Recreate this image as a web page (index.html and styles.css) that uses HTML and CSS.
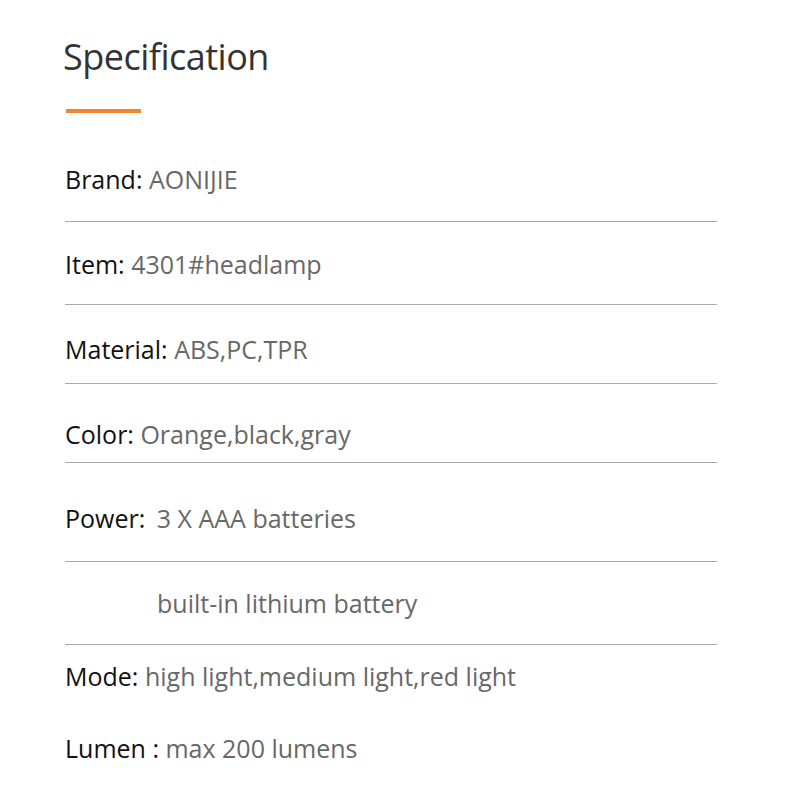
FILE: index.html
```html
<!DOCTYPE html>
<html>
<head>
<meta charset="utf-8">
<link rel="stylesheet" href="styles.css">
</head>
<body>
<div class="spec">
  <h1 class="title">Specification</h1>
  <div class="accent"></div>
  <div class="row r1 sep"><span class="label">Brand: </span><span class="value">AONIJIE</span></div>
  <div class="row r2 sep"><span class="label">Item: </span><span class="value">4301#headlamp</span></div>
  <div class="row r3 sep"><span class="label">Material: </span><span class="value">ABS,PC,TPR</span></div>
  <div class="row r4 sep"><span class="label">Color: </span><span class="value">Orange,black,gray</span></div>
  <div class="row r5 sep"><span class="label">Power: </span><span class="value gap">3 X AAA batteries</span></div>
  <div class="row r6 sep indent"><span class="value">built-in lithium battery</span></div>
  <div class="row r7"><span class="label">Mode: </span><span class="value">high light,medium light,red light</span></div>
  <div class="row r8"><span class="label">Lumen : </span><span class="value">max 200 lumens</span></div>
</div>
</body>
</html>
```

FILE: styles.css
```css
html, body {
  margin: 0;
  padding: 0;
  background: #fff;
}
body {
  font-family: "Open Sans", "Noto Sans", sans-serif;
}
.spec {
  width: 652px;
  padding: 0 0 0 65px;
  display: flex;
  flex-direction: column;
}
.title {
  margin: 35px 0 0 -2px;
  font-size: 36px;
  line-height: 44px;
  font-weight: 400;
  color: #333;
  letter-spacing: -0.5px;
}
.accent {
  margin-top: 30px;
  margin-left: 1px;
  width: 75px;
  height: 4px;
  background: #f5842c;
}
.row {
  font-size: 25px;
  line-height: 30px;
  white-space: pre;
}
.sep {
  border-bottom: 1px solid #ababab;
}
.label { color: #111; }
.value { color: #686868; }
.gap { margin-left: 5px; }
.indent { padding-left: 92px; }
.r1 { padding-top: 51px; padding-bottom: 27px; }
.r2 { padding-top: 27px; padding-bottom: 25px; }
.r3 { padding-top: 29px; padding-bottom: 19px; }
.r4 { padding-top: 35px; padding-bottom: 13px; }
.r5 { padding-top: 40px; padding-bottom: 28px; }
.r6 { padding-top: 26px; padding-bottom: 26px; }
.r7 { padding-top: 16px; }
.r8 { padding-top: 42px; }
```
